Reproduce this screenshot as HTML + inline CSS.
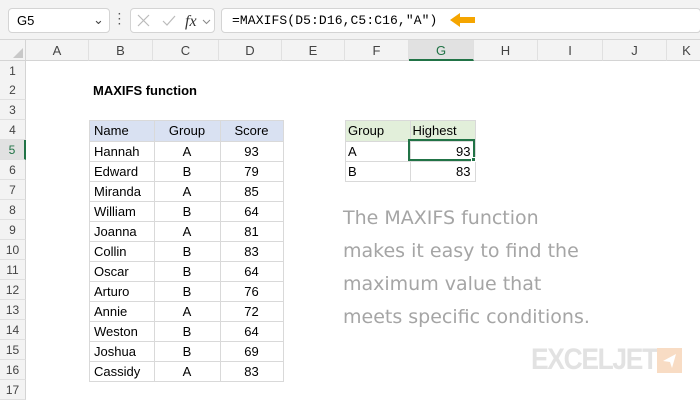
<!DOCTYPE html><html><head><style>
*{margin:0;padding:0;box-sizing:border-box}
body{width:700px;height:400px;overflow:hidden;background:#fff;font-family:"Liberation Sans","DejaVu Sans",sans-serif;font-size:13px;color:#000;position:relative}
.a{position:absolute}
.top{left:0;top:0;width:700px;height:40px;background:#f3f3f3;border-bottom:1px solid #d6d6d6}
.box{background:#fff;border:1px solid #d4d4d4;border-radius:4px}
.ch{top:40px;height:21px;background:#f3f3f3;border-bottom:1px solid #d4d4d4;border-right:1px solid #e0e0e0;text-align:center;line-height:21px;color:#444;font-size:13px}
.rh{left:0;width:26px;height:20px;background:#f3f3f3;border-bottom:1px solid #e0e0e0;border-right:1px solid #d4d4d4;text-align:center;line-height:20px;color:#444;font-size:12px}
.c{height:20px;line-height:19px;border-right:1px solid #d9d9d9;border-bottom:1px solid #d9d9d9;padding:0 4px;font-size:13px;white-space:nowrap}
tr{height:20px}
.hand{left:343px;color:#a5a5a5;font-family:"Comic Sans MS","DejaVu Sans",sans-serif;font-size:19px;line-height:33px;letter-spacing:0px}
</style></head><body>
<div class="a top"></div>
<div class="a box" style="left:8px;top:8px;width:102px;height:25px;padding-left:8px;line-height:23px;font-size:13px">G5<span class="a" style="left:84px;top:-1px;color:#444">&#8964;</span></div>
<div class="a" style="left:118px;top:12px;width:2px;height:16px;color:#555;font-weight:bold;line-height:5px;font-size:10px">·<br>·<br>·</div>
<div class="a box" style="left:130px;top:8px;width:85px;height:25px"></div>
<svg class="a" style="left:135px;top:12px" width="80" height="18"><path d="M3 3L14 14M14 3L3 14" stroke="#bbb" stroke-width="1.2" fill="none"/><path d="M28 9l4 4 8-9" stroke="#bbb" stroke-width="1.2" fill="none"/><text x="50" y="14" font-family="Liberation Serif" font-style="italic" font-size="16" fill="#333">fx</text><path d="M68 8l3.5 3.5L75 8" stroke="#888" fill="none"/></svg>
<div class="a box" style="left:221px;top:8px;width:480px;height:25px;padding-left:10px;line-height:23px;font-family:'Liberation Mono',monospace;font-size:13px;letter-spacing:0.1px">=MAXIFS(D5:D16,C5:C16,"A")</div>
<svg class="a" style="left:448px;top:11px" width="30" height="18"><path d="M2 9L12 2V6H27V12H12V16Z" fill="#f5a500"/></svg>
<div class="a" style="left:0;top:40px;width:26px;height:21px;background:#f3f3f3;border-right:1px solid #d4d4d4;border-bottom:1px solid #d4d4d4"></div>
<svg class="a" style="left:12px;top:47px" width="12" height="12"><path d="M11 1V11H1Z" fill="#c8c8c8"/></svg>
<div class="a ch" style="left:26px;width:63px">A</div>
<div class="a ch" style="left:89px;width:64px">B</div>
<div class="a ch" style="left:153px;width:66px">C</div>
<div class="a ch" style="left:219px;width:63px">D</div>
<div class="a ch" style="left:282px;width:63px">E</div>
<div class="a ch" style="left:345px;width:64px">F</div>
<div class="a ch" style="left:409px;width:65px;background:#e1e1e1;color:#217346;border-bottom:2px solid #217346">G</div>
<div class="a ch" style="left:474px;width:64px">H</div>
<div class="a ch" style="left:538px;width:65px">I</div>
<div class="a ch" style="left:603px;width:64px">J</div>
<div class="a ch" style="left:667px;width:40px">K</div>
<div class="a rh" style="top:61px">1</div><div class="a rh" style="top:80px">2</div><div class="a rh" style="top:100px">3</div><div class="a rh" style="top:120px">4</div>
<div class="a rh" style="top:140px;background:#e1e1e1;color:#217346;border-right:2px solid #217346">5</div>
<div class="a rh" style="top:160px">6</div><div class="a rh" style="top:180px">7</div><div class="a rh" style="top:200px">8</div><div class="a rh" style="top:220px">9</div><div class="a rh" style="top:240px">10</div><div class="a rh" style="top:260px">11</div><div class="a rh" style="top:280px">12</div><div class="a rh" style="top:300px">13</div><div class="a rh" style="top:320px">14</div><div class="a rh" style="top:340px">15</div><div class="a rh" style="top:360px">16</div><div class="a rh" style="top:380px">17</div>
<div class="a" style="left:93px;top:81px;font-weight:bold;line-height:20px">MAXIFS function</div>
<div class="a" style="left:89px;top:120px;border-left:1px solid #d9d9d9;border-top:1px solid #d9d9d9">
<table style="border-collapse:collapse" cellspacing="0">
<tr style="background:#d9e1f2"><td class="c" style="width:64px">Name</td><td class="c" style="width:66px;text-align:center">Group</td><td class="c" style="width:63px;text-align:center">Score</td></tr>
<tr><td class="c">Hannah</td><td class="c" style="text-align:center">A</td><td class="c" style="text-align:center">93</td></tr>
<tr><td class="c">Edward</td><td class="c" style="text-align:center">B</td><td class="c" style="text-align:center">79</td></tr>
<tr><td class="c">Miranda</td><td class="c" style="text-align:center">A</td><td class="c" style="text-align:center">85</td></tr>
<tr><td class="c">William</td><td class="c" style="text-align:center">B</td><td class="c" style="text-align:center">64</td></tr>
<tr><td class="c">Joanna</td><td class="c" style="text-align:center">A</td><td class="c" style="text-align:center">81</td></tr>
<tr><td class="c">Collin</td><td class="c" style="text-align:center">B</td><td class="c" style="text-align:center">83</td></tr>
<tr><td class="c">Oscar</td><td class="c" style="text-align:center">B</td><td class="c" style="text-align:center">64</td></tr>
<tr><td class="c">Arturo</td><td class="c" style="text-align:center">B</td><td class="c" style="text-align:center">76</td></tr>
<tr><td class="c">Annie</td><td class="c" style="text-align:center">A</td><td class="c" style="text-align:center">72</td></tr>
<tr><td class="c">Weston</td><td class="c" style="text-align:center">B</td><td class="c" style="text-align:center">64</td></tr>
<tr><td class="c">Joshua</td><td class="c" style="text-align:center">B</td><td class="c" style="text-align:center">69</td></tr>
<tr><td class="c">Cassidy</td><td class="c" style="text-align:center">A</td><td class="c" style="text-align:center">83</td></tr>
</table></div>
<div class="a" style="left:345px;top:120px;border-left:1px solid #d9d9d9;border-top:1px solid #d9d9d9">
<table style="border-collapse:collapse" cellspacing="0">
<tr style="background:#e2efda"><td class="c" style="width:64px;padding-left:2px">Group</td><td class="c" style="width:65px;padding-left:2px">Highest</td></tr>
<tr><td class="c" style="padding-left:2px">A</td><td class="c" style="text-align:right">93</td></tr>
<tr><td class="c" style="padding-left:2px">B</td><td class="c" style="text-align:right">83</td></tr>
</table></div>
<div class="a" style="left:408px;top:139px;width:67px;height:22px;border:2px solid #217346"></div>
<div class="a" style="left:471px;top:157px;width:5px;height:5px;background:#217346;border:1px solid #fff"></div>
<div class="a hand" style="top:202px">The MAXIFS function</div>
<div class="a hand" style="top:235px">makes it easy to find the</div>
<div class="a hand" style="top:268px">maximum value that</div>
<div class="a hand" style="top:301px">meets specific conditions.</div>
<div class="a" style="left:531px;top:343px;font-size:30px;font-weight:bold;color:#e2e2e2;letter-spacing:-1.5px;line-height:34px;transform:scaleX(0.88);transform-origin:left">EXCELJET</div>
<div class="a" style="left:657px;top:348px;width:25px;height:25px;background:#f8dcc4"></div>
<svg class="a" style="left:657px;top:348px" width="25" height="25"><path d="M6 13L19 6L15 20L13 14Z" fill="#fff"/></svg>
</body></html>
